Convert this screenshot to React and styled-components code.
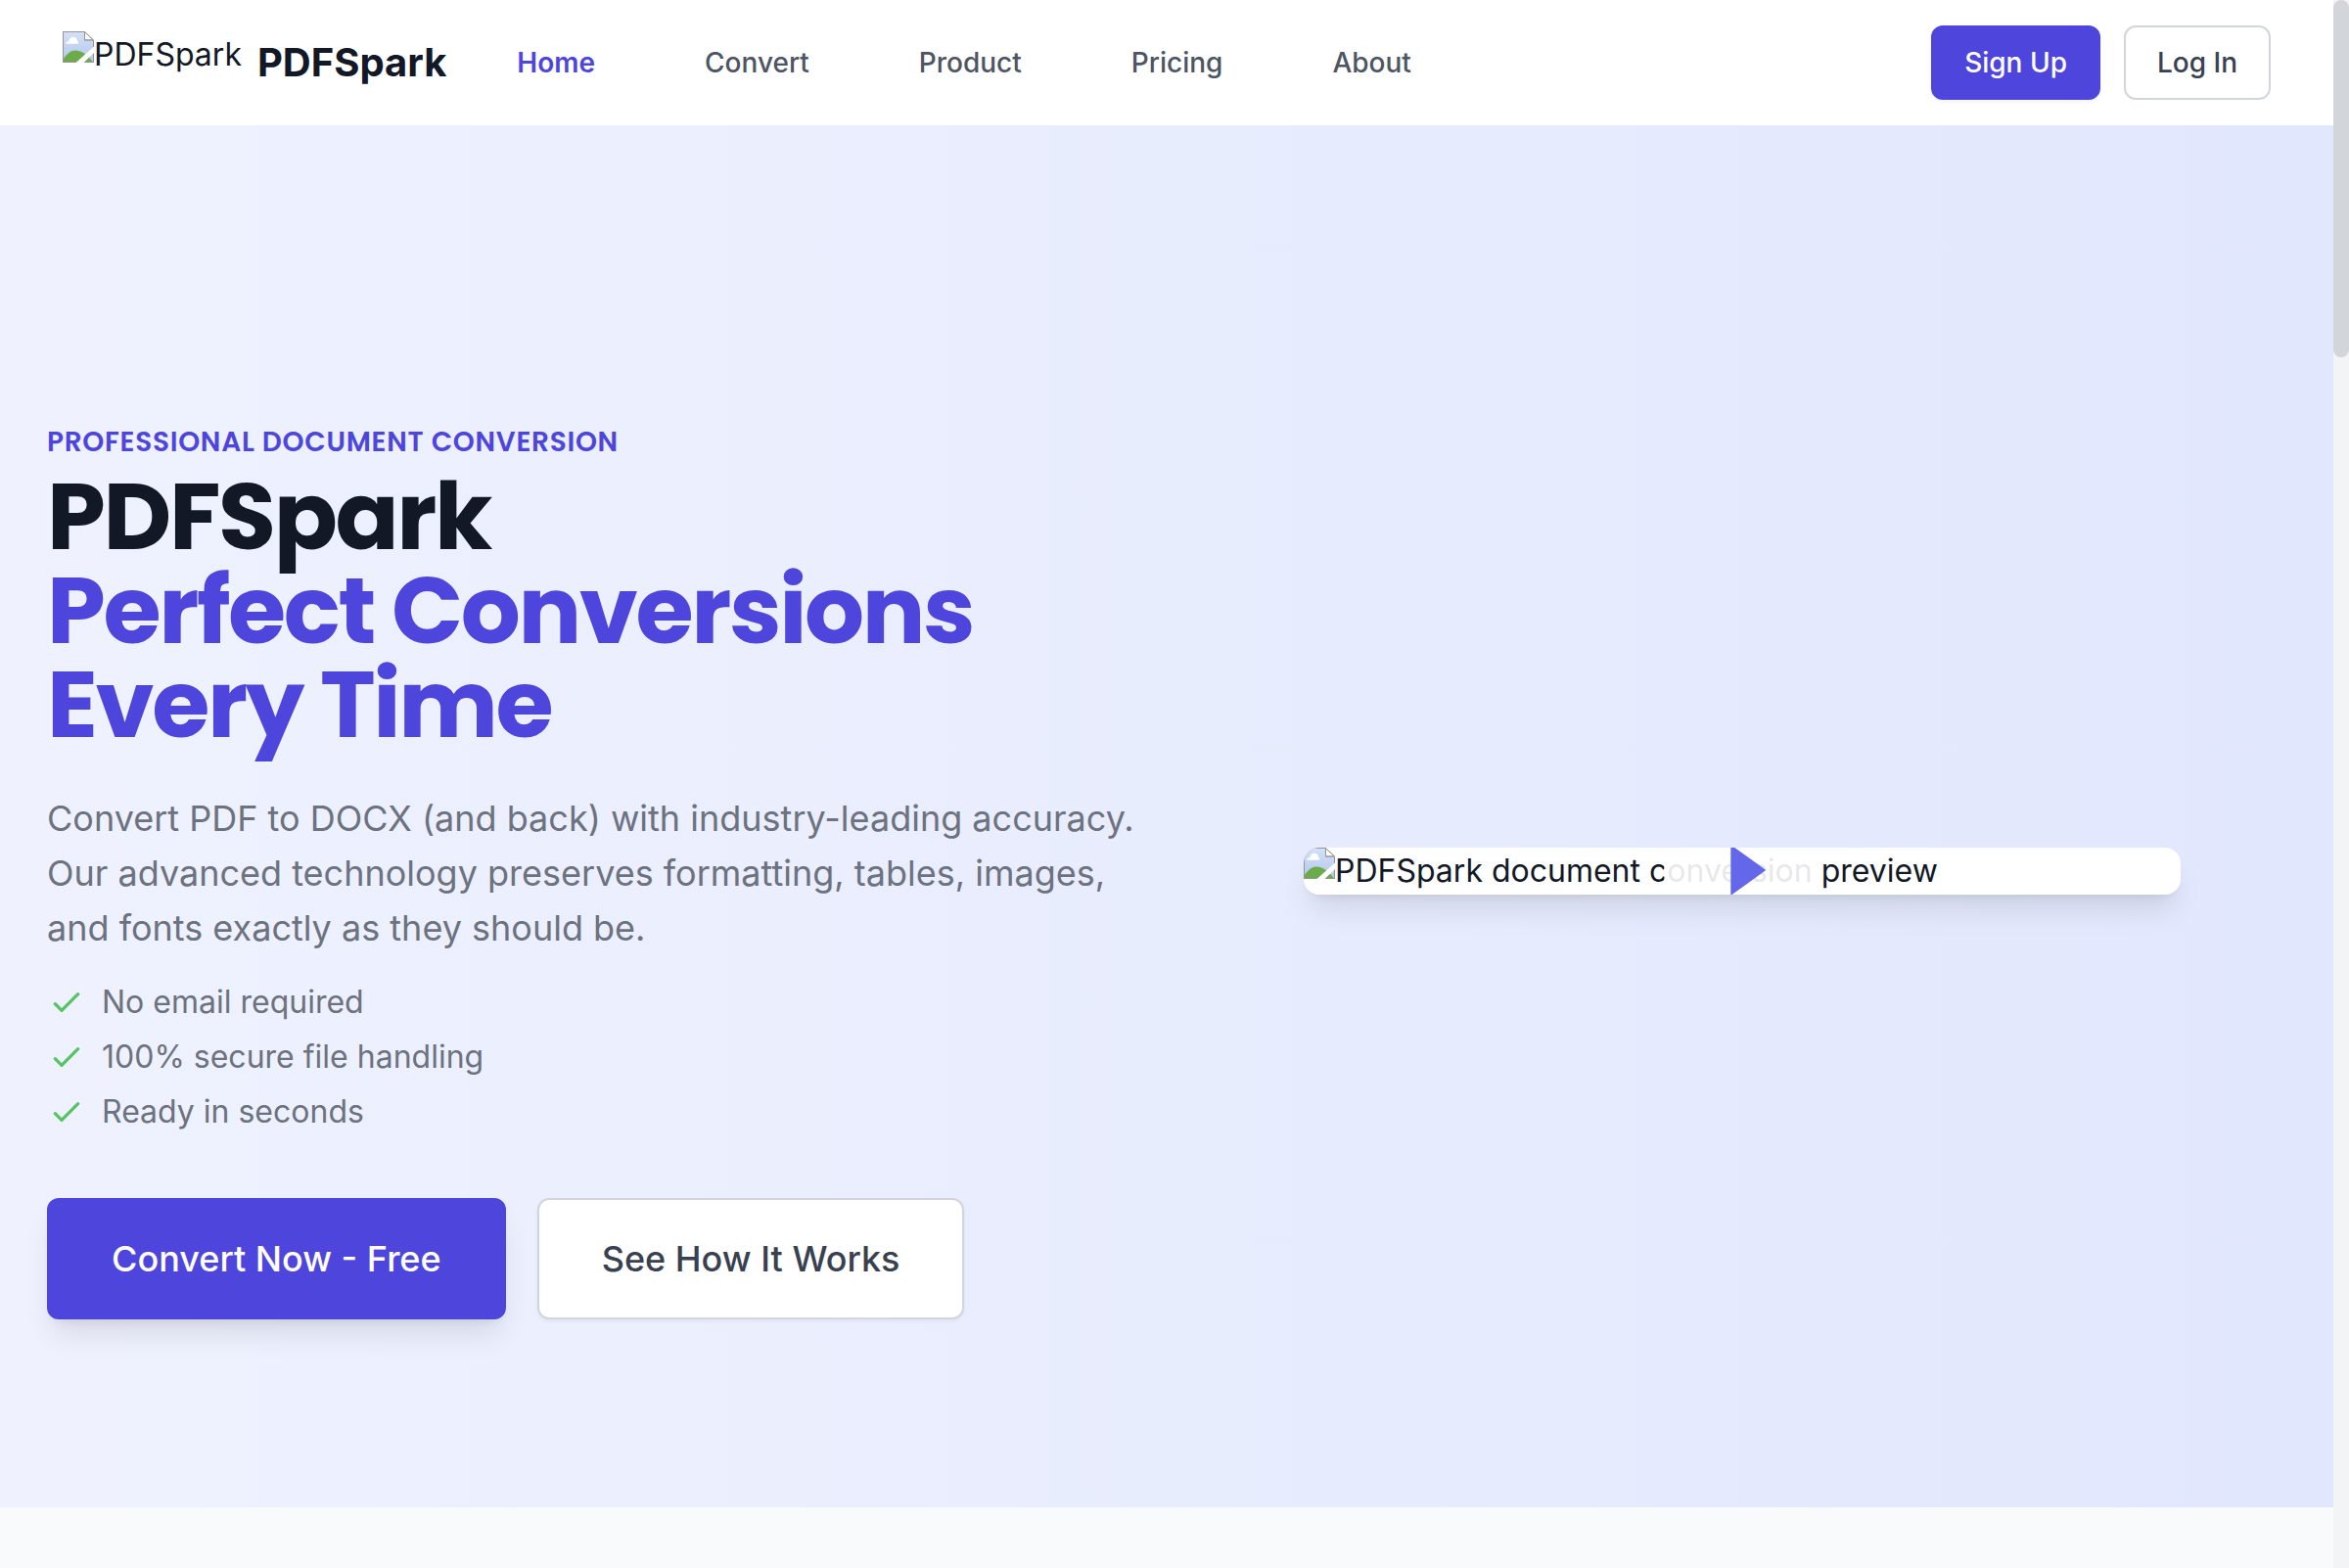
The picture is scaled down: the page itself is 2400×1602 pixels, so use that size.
import React, { useId } from 'react';
import styled, { createGlobalStyle, css } from 'styled-components';

const color = {
  brand: '#4e46dc',
  play: '#6467e9',
  ink: '#121826',
  heading: '#394150',
  nav: '#4d5562',
  muted: '#6c727f',
  line: '#d2d5da',
  green: '#57c366',
  page: '#f9fafc',
  track: '#f3f4f6',
};

const GlobalStyle = createGlobalStyle`
  *, *::before, *::after { box-sizing: border-box; }
  html, body { margin: 0; padding: 0; overflow: hidden; }
  body {
    font-family: Inter, "Noto Sans", sans-serif;
    font-size: 32px;
    line-height: 48px;
    color: ${color.ink};
    background: ${color.page};
  }
  h1, p, ul { margin: 0; padding: 0; }
  ul { list-style: none; }
  a { color: inherit; text-decoration: none; }
  button { font-family: inherit; cursor: pointer; }
  svg { display: block; flex: none; }
`;

const Viewport = styled.div`
  display: flex;
  width: 2400px;
  height: 1602px;
  overflow: hidden;
`;

const Page = styled.div`
  flex: 1;
  min-width: 0;
`;

const ScrollTrack = styled.div`
  width: 16px;
  background: ${color.track};
`;

const ScrollThumb = styled.div`
  height: 365px;
  border-radius: 8px;
  background: ${color.line};
`;

const Header = styled.header`
  display: flex;
  align-items: center;
  height: 128px;
  padding: 0 64px;
  background: #fff;
`;

const Brand = styled.a`
  display: flex;
  align-items: center;
  gap: 16px;
`;

const Logo = styled.span`
  display: flex;
  height: 64px;
  white-space: nowrap;
`;

const BrandName = styled.span`
  font-size: 40px;
  font-weight: 700;
  line-height: 56px;
`;

const Nav = styled.nav`
  display: flex;
  gap: 112px;
  margin-left: 72px;
`;

const NavLink = styled.a`
  font-size: 28px;
  font-weight: ${p => (p.$active ? 600 : 500)};
  line-height: 40px;
  color: ${p => (p.$active ? color.brand : color.nav)};
`;

const HeaderActions = styled.div`
  display: flex;
  gap: 24px;
  margin-left: auto;
`;

const buttonSizes = {
  small: css`
    height: 76px;
    padding: 0 32px;
    font-size: 28px;
    line-height: 40px;
  `,
  large: css`
    height: 124px;
    padding: 0 64px;
    font-size: 36px;
    line-height: 56px;
  `,
};

const buttonKinds = {
  primary: css`
    border-color: ${color.brand};
    background: ${color.brand};
    color: #fff;
  `,
  outline: css`
    border-color: ${color.line};
    background: #fff;
    color: ${color.heading};
  `,
};

const shadows = {
  none: 'none',
  small: '0 2px 4px 0 rgba(0, 0, 0, 0.05)',
  large: '0 20px 30px -6px rgba(0, 0, 0, 0.1), 0 8px 12px -8px rgba(0, 0, 0, 0.1)',
};

const Button = styled.button`
  display: flex;
  align-items: center;
  justify-content: center;
  border: 2px solid;
  border-radius: 12px;
  font-weight: 500;
  white-space: nowrap;
  ${p => buttonSizes[p.$size]}
  ${p => buttonKinds[p.$kind]}
  box-shadow: ${p => shadows[p.$shadow || 'none']};
`;

const Hero = styled.section`
  display: grid;
  grid-template-columns: 1fr 1fr;
  gap: 64px;
  align-items: center;
  height: 1412px;
  padding: 112px 48px 0;
  background: linear-gradient(to right, #eff2fe, #e1e7fd);
`;

const Eyebrow = styled.p`
  margin-bottom: 8px;
  font-family: Poppins, Inter, sans-serif;
  font-size: 28px;
  font-weight: 600;
  line-height: 40px;
  letter-spacing: 0.025em;
  text-transform: uppercase;
  color: ${color.brand};
`;

const Title = styled.h1`
  margin-bottom: 40px;
  font-family: Poppins, Inter, sans-serif;
  font-size: 96px;
  font-weight: 700;
  line-height: 96px;
  letter-spacing: -0.025em;
`;

const TitleLine = styled.span`
  display: block;
  color: ${p => (p.$accent ? color.brand : color.ink)};
`;

const Lead = styled.p`
  margin-bottom: 24px;
  font-size: 36px;
  line-height: 56px;
  color: ${color.muted};
`;

const Features = styled.ul`
  display: flex;
  flex-direction: column;
  gap: 8px;
  margin-bottom: 64px;
`;

const Feature = styled.li`
  display: flex;
  align-items: center;
  gap: 16px;
  color: ${color.muted};
`;

const HeroActions = styled.div`
  display: flex;
  gap: 32px;
`;

const PreviewCard = styled.div`
  position: relative;
  display: flex;
  width: 896px;
  height: 48px;
  border-radius: 16px;
  overflow: hidden;
  white-space: nowrap;
  background: #fff;
`;

const PreviewShadow = styled.div`
  justify-self: center;
  border-radius: 16px;
  box-shadow: ${shadows.large};
`;

const PlayOverlay = styled.div`
  position: absolute;
  inset: 0;
  display: flex;
  align-items: center;
  justify-content: center;
`;

const PlayCircle = styled.div`
  display: flex;
  flex: none;
  align-items: center;
  justify-content: center;
  width: 160px;
  height: 160px;
  border-radius: 50%;
  background: rgba(255, 255, 255, 0.9);
`;

function MissingImage() {
  const id = useId();
  return (
    <svg width="32" height="32" viewBox="0 0 32 32">
      <defs>
        <linearGradient id={id} x1="0" y1="0" x2="0" y2="1">
          <stop offset="0" stopColor="#d3e0f8" />
          <stop offset="1" stopColor="#b4c6ec" />
        </linearGradient>
      </defs>
      <path d="M0 0H22.5L32 9V32H0Z" fill="#959595" />
      <path d="M1 1H22V9.5H31V31H1Z" fill={`url(#${id})`} />
      <path d="M3.5 12.8C2.6 11.2 4.5 10 6.3 10.2C6.8 7 9 5.8 11 5.8C13.5 5.8 14.8 7.5 14.8 9.5C16.3 10 16.5 12.8 14.8 12.8Z" fill="#fff" />
      <path d="M1 31V28C4.5 23 8.5 19.6 13 19.6C20 19.6 26 25 30.5 31Z" fill="#6cab49" />
      <path d="M22.5 .7V8.8H31.2Z" fill="#fff" stroke="#959595" strokeWidth="1" />
      <path d="M32 15.5L13.5 32H21.5L32 22Z" fill="#fff" />
    </svg>
  );
}

function Check() {
  return (
    <svg width="40" height="40" viewBox="0 0 24 24" fill="none" stroke={color.green} strokeWidth="2" strokeLinecap="round" strokeLinejoin="round">
      <path d="M5 13l4 4L19 7" />
    </svg>
  );
}

function PlayIcon() {
  return (
    <svg width="80" height="80" viewBox="0 0 80 80" fill={color.play}>
      <path d="M28.3 13.1v51.8l36-25.9z" />
    </svg>
  );
}

const links = ['Home', 'Convert', 'Product', 'Pricing', 'About'];
const features = ['No email required', '100% secure file handling', 'Ready in seconds'];

export default function App() {
  return (
    <>
      <GlobalStyle />
      <Viewport>
        <Page>
          <Header>
            <Brand href="#">
              <Logo><MissingImage />PDFSpark</Logo>
              <BrandName>PDFSpark</BrandName>
            </Brand>
            <Nav>
              {links.map((label, i) => (
                <NavLink key={label} href="#" $active={i === 0}>{label}</NavLink>
              ))}
            </Nav>
            <HeaderActions>
              <Button $size="small" $kind="primary" $shadow="small">Sign Up</Button>
              <Button $size="small" $kind="outline">Log In</Button>
            </HeaderActions>
          </Header>
          <Hero>
            <div>
              <Eyebrow>Professional Document Conversion</Eyebrow>
              <Title>
                <TitleLine>PDFSpark</TitleLine>
                <TitleLine $accent>Perfect Conversions</TitleLine>
                <TitleLine $accent>Every Time</TitleLine>
              </Title>
              <Lead>
                Convert PDF to DOCX (and back) with industry-leading accuracy. Our advanced
                technology preserves formatting, tables, images, and fonts exactly as they should be.
              </Lead>
              <Features>
                {features.map(text => (
                  <Feature key={text}><Check />{text}</Feature>
                ))}
              </Features>
              <HeroActions>
                <Button $size="large" $kind="primary" $shadow="large">Convert Now - Free</Button>
                <Button $size="large" $kind="outline" $shadow="small">See How It Works</Button>
              </HeroActions>
            </div>
            <PreviewShadow>
              <PreviewCard>
                <MissingImage />PDFSpark document conversion preview
                <PlayOverlay>
                  <PlayCircle><PlayIcon /></PlayCircle>
                </PlayOverlay>
              </PreviewCard>
            </PreviewShadow>
          </Hero>
        </Page>
        <ScrollTrack><ScrollThumb /></ScrollTrack>
      </Viewport>
    </>
  );
}
